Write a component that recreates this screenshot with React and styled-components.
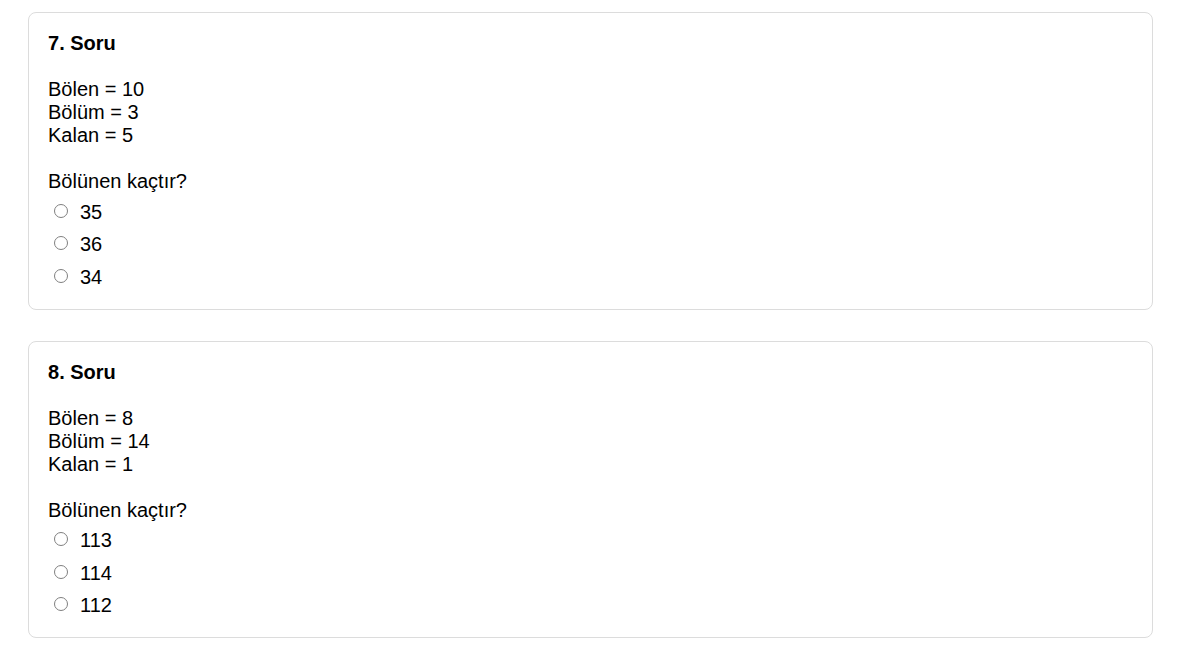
import React, { useState } from 'react'
import styled, { createGlobalStyle } from 'styled-components'

const GlobalStyle = createGlobalStyle`
  body {
    margin: 0;
    background: #fff;
    font-family: "Liberation Sans", Arial, sans-serif;
    color: #000;
  }
`

const questions = [
  {
    no: 7,
    bolen: 10,
    bolum: 3,
    kalan: 5,
    options: [35, 36, 34],
  },
  {
    no: 8,
    bolen: 8,
    bolum: 14,
    kalan: 1,
    options: [113, 114, 112],
  },
]

function Question({ q }) {
  const [picked, setPicked] = useState(null)

  return (
    <Card>
      <Title>{q.no}. Soru</Title>
      <Values>
        <Line>Bölen = {q.bolen}</Line>
        <Line>Bölüm = {q.bolum}</Line>
        <Line>Kalan = {q.kalan}</Line>
      </Values>
      <Ask>Bölünen kaçtır?</Ask>
      {q.options.map((opt) => (
        <Option key={opt}>
          <Radio
            type="radio"
            name={'q' + q.no}
            checked={picked === opt}
            onChange={() => setPicked(opt)}
          />
          {opt}
        </Option>
      ))}
    </Card>
  )
}

export default function App() {
  return (
    <Page>
      <GlobalStyle />
      {questions.map((q) => (
        <Question key={q.no} q={q} />
      ))}
    </Page>
  )
}

const Page = styled.div`
  padding: 12px 0 12px 28px;
  display: flex;
  flex-direction: column;
  gap: 31px;
`
const Card = styled.div`
  box-sizing: border-box;
  width: 1125px;
  border: 1px solid #dcdcdc;
  border-radius: 8px;
  padding: 19px 19px 15px 19px;
  font-size: 20px;
  line-height: 23px;
`
const Title = styled.div`
  font-weight: bold;
  margin-bottom: 23px;
`
const Values = styled.div`
  margin-bottom: 23px;
`
const Line = styled.div``
const Ask = styled.div`
  margin-bottom: 3px;
`
const Option = styled.label`
  display: flex;
  align-items: center;
  padding: 4.75px 0;
`
const Radio = styled.input`
  appearance: none;
  box-sizing: border-box;
  flex: none;
  width: 14px;
  height: 14px;
  margin: -3px 12px 0 6px;
  border: 1px solid #808080;
  border-radius: 50%;
  background: #fff;

  &:checked {
    border-color: #0075ff;
    box-shadow: inset 0 0 0 2px #fff;
    background: #0075ff;
  }
`
